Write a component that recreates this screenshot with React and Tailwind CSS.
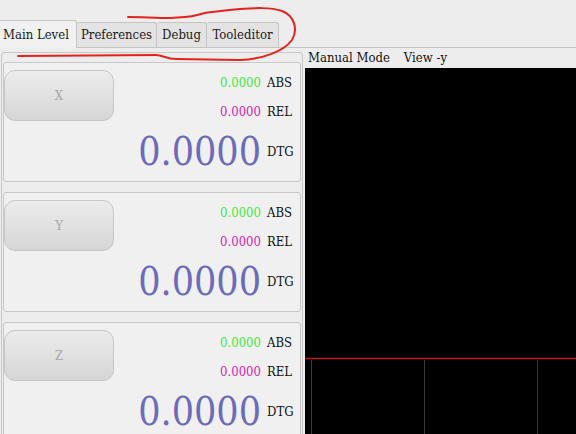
import React from "react";

const axes = ["X", "Y", "Z"];

const AxisBox = ({ name }) => {
  return (
    <div className="h-[120px] shrink-0 flex border border-[#c8c8c8] rounded-[3px] bg-[#f0f0f0]">
      <div className="pt-[7px]">
        <button className="w-[110px] h-[51px] rounded-[11px] border border-[#c6c6c6] bg-gradient-to-b from-[#ececec] to-[#d6d6d6] text-[13px] text-[#a8a8a8]">
          {name}
        </button>
      </div>
      <div className="flex-1 flex flex-col items-end pr-[8px] pt-[11px]">
        <div className="flex items-center h-[18px] gap-[6px] text-[13px]">
          <span className="text-[#3ee83e]">0.0000</span>
          <span className="text-[#111] w-[25px]">ABS</span>
        </div>
        <div className="flex items-center h-[18px] mt-[11px] gap-[6px] text-[13px]">
          <span className="text-[#d91cb5]">0.0000</span>
          <span className="text-[#111] w-[25px]">REL</span>
        </div>
        <div className="flex items-start mt-[11px] gap-[6px]">
          <span className="text-[39px] leading-none text-[#6b6bb9]">0.0000</span>
          <span className="text-[13px] text-[#111] w-[25px] mt-[10px]">DTG</span>
        </div>
      </div>
    </div>
  );
};

const App = () => {
  return (
    <div
      className="relative w-[576px] h-[434px] overflow-hidden bg-[#ededed] text-[#1a1a1a]"
      style={{ fontFamily: '"DejaVu Serif Condensed", "DejaVu Serif", serif' }}
    >
      {/* tab strip */}
      <div className="h-[48px] flex items-end border-b border-[#c4c4c4] text-[13px] whitespace-nowrap">
        <div className="w-[77px] h-[28px] -mb-px flex items-center pl-[3px] bg-[#f1f1f1] border-t border-r border-[#c4c4c4] rounded-tr-[3px]">
          Main Level
        </div>
        <div className="w-[80px] h-[25px] flex items-center justify-center bg-[#e3e3e3] border-t border-r border-[#c4c4c4] rounded-t-[3px]">
          Preferences
        </div>
        <div className="w-[50px] h-[25px] flex items-center justify-center bg-[#e3e3e3] border-t border-r border-[#c4c4c4] rounded-t-[3px]">
          Debug
        </div>
        <div className="w-[72px] h-[25px] flex items-center justify-center bg-[#e3e3e3] border-t border-r border-[#c4c4c4] rounded-t-[3px]">
          Tooleditor
        </div>
      </div>

      <div className="flex h-[386px]">
        {/* DRO column */}
        <div className="w-[305px] shrink-0 pl-[1px] pr-[2px] pt-[4px]">
          <div className="h-[400px] border border-[#c8c8c8] rounded-[3px] px-[1px] pt-[9px] flex flex-col gap-[10px]">
            {axes.map((a) => (
              <AxisBox key={a} name={a} />
            ))}
          </div>
        </div>

        {/* graphics column */}
        <div className="flex-1 flex flex-col">
          <div className="h-[20px] flex items-center pl-[3px] text-[13px] text-[#111] gap-[14px]">
            <span>Manual Mode</span>
            <span>View -y</span>
          </div>
          <div className="flex-1 bg-black relative">
            <svg width="271" height="366" className="absolute left-0 top-0">
              <line x1="0" y1="290.5" x2="271" y2="290.5" stroke="#c41a1a" strokeWidth="1.5" />
              <line x1="6.5" y1="292" x2="6.5" y2="366" stroke="#3a3a3a" strokeWidth="1" />
              <line x1="119.5" y1="292" x2="119.5" y2="366" stroke="#3a3a3a" strokeWidth="1" />
              <line x1="232.5" y1="292" x2="232.5" y2="366" stroke="#3a3a3a" strokeWidth="1" />
            </svg>
          </div>
        </div>
      </div>

      {/* hand-drawn red annotation */}
      <svg width="576" height="434" className="absolute left-0 top-0 pointer-events-none">
        <path
          d="M18,56 L156,55 C163,55 166,59 176,59 L240,60 C262,59 283,52 292,40 C298,30 295,16 282,11 C270,7 255,8 240,9 C228,10 222,11 212,12 C200,13 198,16 185,17 L170,18 C155,18 142,17 128,17"
          fill="none"
          stroke="#e3231c"
          strokeWidth="2"
          strokeLinecap="round"
          strokeLinejoin="round"
        />
      </svg>
    </div>
  );
};

export default App;
